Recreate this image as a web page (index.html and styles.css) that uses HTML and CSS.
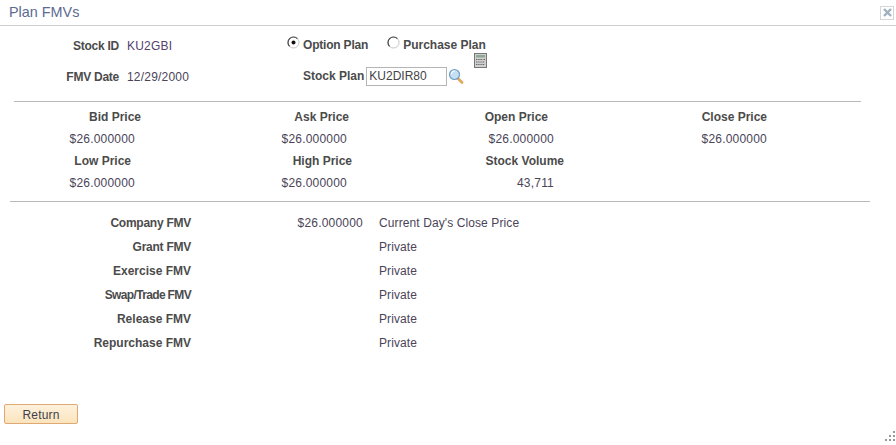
FILE: index.html
```html
<!DOCTYPE html>
<html lang="en">
<head>
  <meta charset="UTF-8">
  <title>Plan FMVs</title>
  <link rel="stylesheet" href="styles.css">
</head>
<body>
  <div class="title-bar">
    <span class="title">Plan FMVs</span>
    <span class="close-box">
      <svg width="9" height="9" viewBox="0 0 9 9"><path d="M1 1l7 7M8 1l-7 7" stroke="#9fb0c0" stroke-width="2.4"/></svg>
    </span>
  </div>

  <div class="top">
    <div class="top-left">
      <div class="id-row"><span class="lbl tighter">Stock ID</span><span class="val stock-id">KU2GBI</span></div>
      <div class="id-row"><span class="lbl tighter">FMV Date</span><span class="val">12/29/2000</span></div>
    </div>
    <div class="top-right">
      <div class="radio-row">
        <span class="radio-item">
          <svg class="radio" width="13" height="13" viewBox="0 0 13 13"><circle cx="6.5" cy="6.5" r="5.5" fill="#fff" stroke="#c4c4c4"/><path d="M2.6 10.4A5.5 5.5 0 0 1 10.4 2.6" fill="none" stroke="#444" stroke-width="1.2"/><circle cx="6.5" cy="6.5" r="2" fill="#111"/></svg>
          <span class="lbl tight">Option Plan</span>
        </span>
        <span class="radio-item">
          <svg class="radio" width="13" height="13" viewBox="0 0 13 13"><circle cx="6.5" cy="6.5" r="5.5" fill="#fff" stroke="#c4c4c4"/><path d="M2.6 10.4A5.5 5.5 0 0 1 10.4 2.6" fill="none" stroke="#444" stroke-width="1.2"/></svg>
          <span class="lbl">Purchase Plan</span>
        </span>
      </div>
      <div class="plan-row">
        <span class="lbl">Stock Plan</span>
        <span class="plan-input">KU2DIR80</span>
        <svg class="lens" width="16" height="16" viewBox="0 0 16 16">
          <path d="M9.5 10l4.5 4.5" stroke="#e0a860" stroke-width="2.8" stroke-linecap="round"/>
          <circle cx="6.5" cy="6.5" r="5" fill="#c5e0f5" stroke="#6f9fc4" stroke-width="1.2"/>
          <path d="M3.5 6a3 3 0 0 1 3-3" fill="none" stroke="#fff" stroke-width="1.2"/>
        </svg>
        <svg class="calc" width="13" height="15" viewBox="0 0 13 15">
          <rect x="0.5" y="0.5" width="12" height="14" fill="#d0d0d0" stroke="#777"/>
          <rect x="2" y="2" width="9" height="2.5" fill="#8fa894"/>
          <rect x="10" y="6" width="1" height="1" fill="#b04040"/>
          <path d="M2 6.5h7.5M2 9h9M2 11.5h9" stroke="#666" stroke-width="1.2" stroke-dasharray="1.4 .8"/>
        </svg>
      </div>
    </div>
  </div>

  <hr class="rule rule-one">

  <div class="prices">
    <div class="price-row labels-a lbl"><span>Bid Price</span><span>Ask Price</span><span>Open Price</span><span>Close Price</span></div>
    <div class="price-row values-a val"><span>$26.000000</span><span>$26.000000</span><span>$26.000000</span><span>$26.000000</span></div>
    <div class="price-row labels-b lbl"><span>Low Price</span><span>High Price</span><span>Stock Volume</span></div>
    <div class="price-row values-b val"><span>$26.000000</span><span>$26.000000</span><span>43,711</span></div>
  </div>

  <hr class="rule rule-two">

  <div class="fmv-table">
    <span class="lbl tighter">Company FMV</span><span class="val amount">$26.000000</span><span class="val note">Current Day's Close Price</span>
    <span class="lbl tighter">Grant FMV</span><span class="val amount"></span><span class="val note">Private</span>
    <span class="lbl">Exercise FMV</span><span class="val amount"></span><span class="val note">Private</span>
    <span class="lbl narrow">Swap/Trade FMV</span><span class="val amount"></span><span class="val note">Private</span>
    <span class="lbl">Release FMV</span><span class="val amount"></span><span class="val note">Private</span>
    <span class="lbl">Repurchase FMV</span><span class="val amount"></span><span class="val note">Private</span>
  </div>

  <button class="return-btn">Return</button>

  <svg class="grip" width="12" height="12" viewBox="0 0 12 12" fill="#999">
    <rect x="9" y="1" width="2" height="2"/>
    <rect x="5" y="5" width="2" height="2"/><rect x="9" y="5" width="2" height="2"/>
    <rect x="1" y="9" width="2" height="2"/><rect x="5" y="9" width="2" height="2"/><rect x="9" y="9" width="2" height="2"/>
  </svg>
</body>
</html>
```

FILE: styles.css
```css
body {
  margin: 0;
  height: 445px;
  overflow: hidden;
  position: relative;
  background: #fff;
  font-family: "Liberation Sans", Arial, sans-serif;
  font-size: 12px;
  color: #3f3f4f;
}

.title-bar {
  display: flex;
  justify-content: space-between;
  align-items: center;
  height: 25px;
  padding: 0 2px 0 9px;
  border-bottom: 1px solid #cfcfcf;
}

.title {
  font-size: 14.4px;
  color: #5b6b92;
  margin-top: -2px;
}

.close-box {
  display: flex;
  align-items: center;
  justify-content: center;
  width: 12px;
  height: 12px;
  border: 1px solid #d6d6d6;
}

.lbl {
  font-weight: bold;
  color: #4b4b4b;
}

.val {
  color: #4a4458;
  letter-spacing: 0.2px;
}

.stock-id {
  color: #54406e;
}

.tight {
  letter-spacing: -0.2px;
}

.tighter {
  letter-spacing: -0.25px;
}

.narrow {
  letter-spacing: -0.65px;
}

.top {
  display: flex;
  height: 75px;
}

.top-left {
  width: 287px;
  padding-top: 13px;
}

.id-row {
  display: grid;
  grid-template-columns: 119px auto;
  column-gap: 8px;
  height: 31px;
  line-height: 15px;
}

.id-row .lbl {
  text-align: right;
}

.top-right {
  padding-top: 11px;
}

.radio-row {
  display: flex;
  gap: 19px;
  height: 29px;
}

.radio-item {
  display: flex;
  gap: 3px;
  line-height: 17px;
  height: 17px;
}

.radio {
  margin-top: -1px;
}

.plan-row {
  display: flex;
  align-items: center;
  position: relative;
  height: 20px;
  padding-left: 16px;
}

.plan-input {
  width: 77px;
  height: 17px;
  line-height: 17px;
  margin-left: 2px;
  padding-left: 2px;
  border: 1px solid #b5b5b5;
  color: #444;
}

.lens {
  margin-left: 1px;
}

.calc {
  position: absolute;
  left: 187px;
  top: -13px;
}

.rule {
  height: 0;
  margin: 0;
  border: 0;
  border-top: 1px solid #b9b9b9;
}

.rule-one {
  margin: 0 35px 0 14px;
}

.rule-two {
  margin: 0 26px 0 10px;
}

.prices {
  height: 99px;
  padding-top: 8px;
  box-sizing: border-box;
}

.price-row {
  display: grid;
  height: 22px;
  line-height: 15px;
  text-align: right;
}

.labels-a { grid-template-columns: 141px 208px 199px 219px; }
.values-a { grid-template-columns: 135px 212px 207px 213px; }
.labels-b { grid-template-columns: 131px 221px 212px; }
.values-b { grid-template-columns: 135px 212px 207px; }

.fmv-table {
  display: grid;
  grid-template-columns: 191px 172px auto;
  grid-auto-rows: 24px;
  padding-top: 14px;
  line-height: 15px;
}

.fmv-table .lbl {
  text-align: right;
}

.amount {
  text-align: right;
}

.note {
  margin-left: 16px;
  letter-spacing: 0.1px;
}

.return-btn {
  position: absolute;
  left: 4px;
  top: 404px;
  width: 74px;
  height: 20px;
  padding: 1px 0 0;
  border: 1px solid #e0a873;
  border-radius: 2px;
  background: linear-gradient(#fdf1dc, #fbe4bc);
  font-family: inherit;
  font-size: 12px;
  letter-spacing: 0.2px;
  color: #3f3f4f;
}

.grip {
  position: absolute;
  right: 0;
  bottom: 3px;
}
```
